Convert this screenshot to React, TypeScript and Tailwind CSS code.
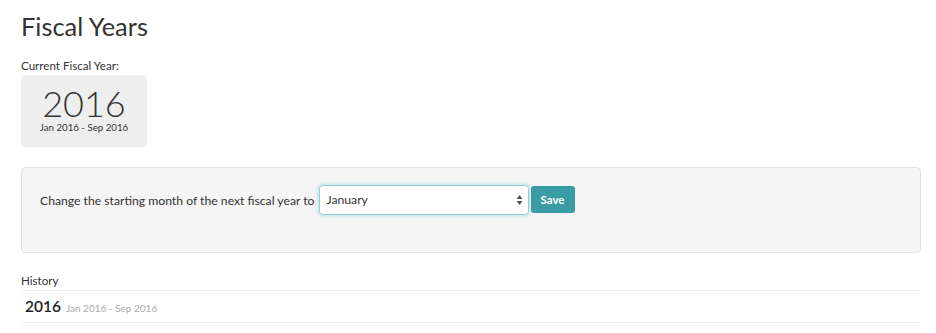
import React from "react";

export default function App() {
  return (
    <div className="min-h-[333px] bg-white pl-[21px] pr-[15px] font-['Lato','Noto_Sans',sans-serif] text-[#333]">
      <h1 className="pt-[10px] text-[25.4px] leading-[32px] font-normal text-[#333]">Fiscal Years</h1>
      <div className="mt-[17px] text-[11.6px] leading-[14px]">Current Fiscal Year:</div>
      <div className="mt-[2px] flex h-[72px] w-[126px] flex-col items-center rounded-[4px] bg-[#eeeeee] pt-[11px]">
        <div className="text-[36px] leading-[34px] font-light text-[#333]">2016</div>
        <div className="mt-[1px] text-[9.7px] leading-[12px]">Jan 2016 - Sep 2016</div>
      </div>
      <div className="mt-[20px] flex h-[86px] items-start rounded-[4px] border border-[#e3e3e3] bg-[#f5f5f5] pl-[18px] pt-[17px]">
        <span className="mt-[8px] text-[12.2px] leading-[16px]">Change the starting month of the next fiscal year to</span>
        <div className="ml-[4px] flex h-[30px] w-[210px] items-center justify-between rounded-[4px] border border-[#8fcfd6] bg-white pl-[7px] pr-[5px] shadow-[0_0_5px_rgba(102,190,200,0.55)]">
          <span className="text-[12.2px] text-[#333]">January</span>
          <svg width="7" height="12" viewBox="0 0 7 12">
            <path d="M3.5 1 L6.5 5 H0.5 Z" fill="#555" />
            <path d="M3.5 11 L6.5 7 H0.5 Z" fill="#555" />
          </svg>
        </div>
        <button className="ml-[2px] mt-[1px] flex h-[27px] w-[44px] items-center justify-center rounded-[3px] bg-[#3a9ca5] text-[11.5px] font-bold text-white">
          Save
        </button>
      </div>
      <div className="mt-[21px] text-[11.6px] leading-[14px]">History</div>
      <div className="mt-[2px] flex items-baseline gap-[5px] border-y border-[#eeeeee] py-[6px] pl-[4px]">
        <span className="text-[15.5px] leading-[18px] font-semibold text-[#222]">2016</span>
        <span className="text-[10px] text-[#aaa]">Jan 2016 - Sep 2016</span>
      </div>
    </div>
  );
}
